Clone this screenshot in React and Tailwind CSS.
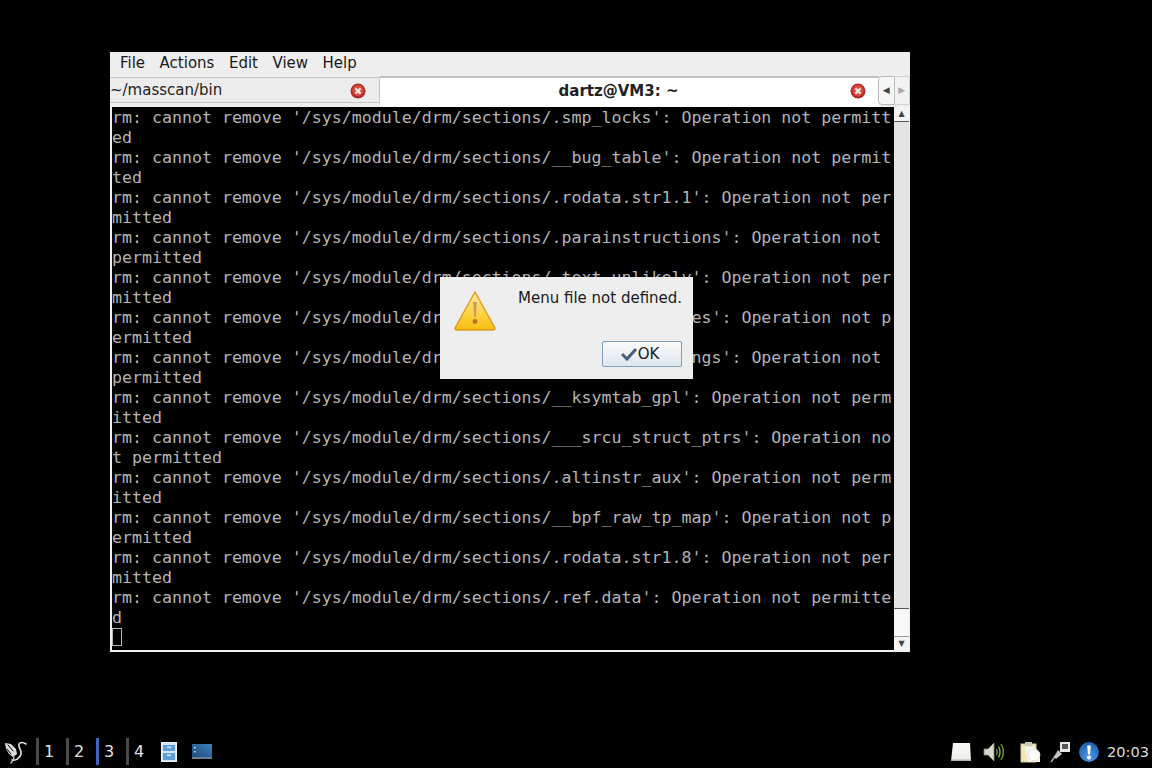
import React from "react";

const lines = [
  "rm: cannot remove '/sys/module/drm/sections/.smp_locks': Operation not permitt",
  "ed",
  "rm: cannot remove '/sys/module/drm/sections/__bug_table': Operation not permit",
  "ted",
  "rm: cannot remove '/sys/module/drm/sections/.rodata.str1.1': Operation not per",
  "mitted",
  "rm: cannot remove '/sys/module/drm/sections/.parainstructions': Operation not ",
  "permitted",
  "rm: cannot remove '/sys/module/drm/sections/.text.unlikely': Operation not per",
  "mitted",
  "rm: cannot remove '/sys/module/drm/sections/.retpoline_sites': Operation not p",
  "ermitted",
  "rm: cannot remove '/sys/module/drm/sections/__ksymtab_strings': Operation not ",
  "permitted",
  "rm: cannot remove '/sys/module/drm/sections/__ksymtab_gpl': Operation not perm",
  "itted",
  "rm: cannot remove '/sys/module/drm/sections/___srcu_struct_ptrs': Operation no",
  "t permitted",
  "rm: cannot remove '/sys/module/drm/sections/.altinstr_aux': Operation not perm",
  "itted",
  "rm: cannot remove '/sys/module/drm/sections/__bpf_raw_tp_map': Operation not p",
  "ermitted",
  "rm: cannot remove '/sys/module/drm/sections/.rodata.str1.8': Operation not per",
  "mitted",
  "rm: cannot remove '/sys/module/drm/sections/.ref.data': Operation not permitte",
  "d",
];

const CloseIcon = () => (
  <svg width="16" height="16" viewBox="0 0 16 16">
    <circle cx="8" cy="8" r="7.5" fill="#b02c24" />
    <circle cx="8" cy="7.5" r="5.6" fill="#d9483c" />
    <path d="M5.4 5.4L10.6 10.6M10.6 5.4L5.4 10.6" stroke="#f2e4dc" strokeWidth="2.2" />
  </svg>
);

const WarningIcon = () => (
  <svg width="44" height="42" viewBox="0 0 44 42">
    <defs>
      <linearGradient id="warn" x1="0" y1="0" x2="0" y2="1">
        <stop offset="0" stopColor="#fdeaa0" />
        <stop offset="0.6" stopColor="#fbd240" />
        <stop offset="1" stopColor="#f7bd10" />
      </linearGradient>
    </defs>
    <path d="M22 2L42 38Q42 40 40 40H4Q2 40 2 38Z" fill="url(#warn)" stroke="#e59a20" strokeWidth="1.5" strokeLinejoin="round" />
    <path d="M20.2 12H23.8L22.8 27H21.2Z" fill="#c89a60" />
    <circle cx="22" cy="31.5" r="2.4" fill="#b8701f" />
  </svg>
);

const Bird = () => (
  <svg width="24" height="24" viewBox="0 0 24 24" fill="none" strokeLinecap="round">
    <path d="M2 3L8 4L13 9L14 14L10 17L6 14L3 9Z" fill="#dcdcdc" />
    <path d="M5 5L10 11M4 9L8 14" stroke="#000" strokeWidth="1" />
    <path d="M23 4C20 2 17 2 16 4C15 8 19 10 18 14C17 18 13 21 9 20" stroke="#e8e8e8" strokeWidth="1.6" />
    <path d="M11 17C11 19 10 21 8 23" stroke="#d0d0d0" strokeWidth="1.3" />
  </svg>
);

const Cabinet = () => (
  <svg width="16" height="20" viewBox="0 0 16 20">
    <rect x="0.5" y="0.5" width="15" height="19" fill="#d5e4f3" stroke="#eef4fa" />
    <rect x="2" y="3" width="12" height="6" fill="#5c9fdc" />
    <rect x="2" y="11" width="12" height="7" fill="#5c9fdc" />
    <rect x="6" y="4.5" width="4" height="1.5" fill="#dbe9f6" />
    <rect x="6" y="12.5" width="4" height="1.5" fill="#dbe9f6" />
  </svg>
);

const Screen = () => (
  <svg width="20" height="15" viewBox="0 0 20 15">
    <defs>
      <linearGradient id="scr" x1="0" y1="1" x2="1" y2="0">
        <stop offset="0" stopColor="#1d4a7a" />
        <stop offset="1" stopColor="#3d82c0" />
      </linearGradient>
    </defs>
    <rect width="20" height="13" fill="url(#scr)" />
    <rect x="0" y="13" width="20" height="2" fill="#6d7f92" />
    <rect x="2" y="3" width="1.5" height="1.5" fill="#cfe0ee" />
    <rect x="2" y="7" width="1.5" height="1.5" fill="#cfe0ee" />
  </svg>
);

const Drive = () => (
  <svg width="20" height="18" viewBox="0 0 20 18">
    <defs>
      <linearGradient id="drv" x1="0" y1="0" x2="0" y2="1">
        <stop offset="0" stopColor="#f8f8f6" />
        <stop offset="0.85" stopColor="#f0f0ec" />
        <stop offset="1" stopColor="#a8a8a4" />
      </linearGradient>
    </defs>
    <path d="M2 0H19L20 18H0Z" fill="url(#drv)" />
  </svg>
);

const Speaker = () => (
  <svg width="22" height="20" viewBox="0 0 22 20" fill="none">
    <path d="M1 7H5L11 1V19L5 13H1Z" fill="#d8d8d0" stroke="#8a8a80" strokeWidth="0.8" />
    <path d="M13.5 7Q15 10 13.5 13" stroke="#7fb53c" strokeWidth="1.2" />
    <path d="M15.5 4.5Q18.5 10 15.5 15.5" stroke="#7fb53c" strokeWidth="1.4" />
    <path d="M18 2Q23 10 18 18" stroke="#6aa02e" strokeWidth="1.4" />
  </svg>
);

const Clipboard = () => (
  <svg width="22" height="22" viewBox="0 0 22 22">
    <rect x="1" y="3" width="15" height="18" fill="#f0e8b8" stroke="#d8cd90" />
    <rect x="5" y="1" width="7" height="4" fill="#c8c8c0" />
    <path d="M5 6H14L20 12V21H8Z" fill="#f4f4f2" />
    <circle cx="14" cy="14" r="6" fill="#fcfcfc" stroke="#d0d0d0" strokeWidth="0.6" />
  </svg>
);

const Plug = () => (
  <svg width="21" height="22" viewBox="0 0 21 22">
    <path d="M1 21L6 14" stroke="#a8a8a8" strokeWidth="1.6" />
    <path d="M4 16L8 9L12 13L6 18Z" fill="#c8c8c8" />
    <rect x="10" y="1" width="10" height="10" fill="#e8e8e8" />
    <rect x="12" y="3" width="6" height="5" fill="#555" />
  </svg>
);

const Info = () => (
  <svg width="20" height="20" viewBox="0 0 20 20">
    <defs>
      <radialGradient id="inf" cx="0.5" cy="0.75" r="0.75">
        <stop offset="0" stopColor="#4f9be6" />
        <stop offset="1" stopColor="#1a5cae" />
      </radialGradient>
    </defs>
    <circle cx="10" cy="10" r="10" fill="url(#inf)" />
    <path d="M8.2 3.5H11.8L11 12.5H9Z" fill="#fff" />
    <circle cx="10" cy="15.5" r="2" fill="#fff" />
  </svg>
);

const Workspace = ({ n, active }) => (
  <div className="flex w-[30px] items-center">
    <div className={`h-[27px] w-[3px] ${active ? "bg-[#3f63b8]" : "bg-[#4a4a4a]"}`} />
    <span className="ml-[5px] text-[16px] text-[#e2e2e2]">{n}</span>
  </div>
);

export default function App() {
  return (
    <div className="relative h-[768px] w-[1152px] overflow-hidden bg-black font-['DejaVu_Sans',sans-serif]">
      {/* terminal window */}
      <div className="absolute left-[110px] top-[52px] flex h-[600px] w-[800px] flex-col bg-[#eeeeee]">
        <div className="flex h-[24px] items-center pb-[2px] pl-[10px] text-[15px] text-[#1a1a1a]">
          <span className="mr-[14.5px]">File</span>
          <span className="mr-[14.5px]">Actions</span>
          <span className="mr-[14.5px]">Edit</span>
          <span className="mr-[14.5px]">View</span>
          <span>Help</span>
        </div>
        <div className="flex h-[31px]">
          <div className="mt-[1px] flex h-[26px] w-[270px] items-center justify-between border-y border-r border-[#c4c4c4] bg-[#ececec] pr-[13px] pt-[1px] text-[15px] text-[#222]">
            <span>~/masscan/bin</span>
            <CloseIcon />
          </div>
          <div className="flex h-[31px] w-[499px] items-center border-t-2 border-[#c0c0c0] bg-white pb-[3px] pr-[13px]">
            <span className="flex-1 pl-[7px] text-center text-[15px] font-bold text-[#222]">dartz@VM3: ~</span>
            <CloseIcon />
          </div>
          <div className="ml-[-1px] flex h-[29px] w-[32px] text-[9px]">
            <div className="flex flex-1 items-center justify-center rounded-l-sm border border-[#bdbdbd] bg-[#f6f6f6] text-[#444]">◀</div>
            <div className="flex flex-1 items-center justify-center border-y border-r border-[#d0d0d0] bg-[#f2f2f2] text-[#aaa]">▶</div>
          </div>
        </div>
        <div className="flex min-h-0 flex-1 pb-[2px] pl-[2px] pr-[1px]">
          <div className="relative min-w-0 flex-1 overflow-hidden bg-black pr-[2px] pt-[1px] font-['DejaVu_Sans_Mono',monospace] text-[16.6px] leading-[20px] text-[#b4b4b4]">
            {lines.map((line, i) => (
              <div key={i} className="h-[20px] whitespace-pre">{line}</div>
            ))}
            <div className="h-[18px] w-[10px] border border-[#b4b4b4]" />
          </div>
          <div className="flex w-[15px] flex-col bg-[#e4e4e4]">
            <div className="flex h-[15px] items-center justify-center border-b border-[#555] bg-[#f4f4f4] text-[8px] text-[#444]">▲</div>
            <div className="flex-1" />
            <div className="h-[28px] border-t border-[#555] bg-[#f8f8f8]" />
            <div className="flex h-[14px] items-center justify-center border-t border-[#999] bg-[#f4f4f4] text-[8px] text-[#444]">▼</div>
          </div>
        </div>
      </div>

      {/* message box */}
      <div className="absolute left-[440px] top-[277px] h-[102px] w-[253px] bg-[#eeeeee]">
        <div className="flex pl-[13px] pt-[13px]">
          <WarningIcon />
          <span className="ml-[21px] text-[15px] leading-[16px] text-[#1a1a1a]">Menu file not defined.</span>
        </div>
        <div className="mr-[11px] mt-[9px] flex justify-end">
          <button className="flex h-[26px] w-[80px] items-center justify-center rounded-[2px] border border-[#7f9db9] bg-gradient-to-b from-[#fbfbfb] to-[#dfe6ee] pr-[4px] text-[15px] text-[#1a1a1a]">
            <svg width="16" height="14" viewBox="0 0 16 14" className="mr-[1px]">
              <path d="M1 7L6 12L15 2" fill="none" stroke="#4a5f7a" strokeWidth="3" />
            </svg>
            OK
          </button>
        </div>
      </div>

      {/* panel */}
      <div className="absolute bottom-0 left-0 flex h-[34px] w-full items-center pl-[3px] pr-[3px] pt-[1px]">
        <div className="mr-[9px] w-[24px]"><Bird /></div>
        <Workspace n="1" />
        <Workspace n="2" />
        <Workspace n="3" active />
        <Workspace n="4" />
        <div className="ml-[5px] mr-[15px]"><Cabinet /></div>
        <Screen />
        <div className="ml-auto flex items-center">
          <div className="mr-[12px]"><Drive /></div>
          <div className="mr-[15px]"><Speaker /></div>
          <div className="mr-[8px]"><Clipboard /></div>
          <div className="mr-[8px]"><Plug /></div>
          <div className="mr-[8px]"><Info /></div>
          <span className="text-[14.6px] text-[#dcdcdc]">20:03</span>
        </div>
      </div>
    </div>
  );
}
